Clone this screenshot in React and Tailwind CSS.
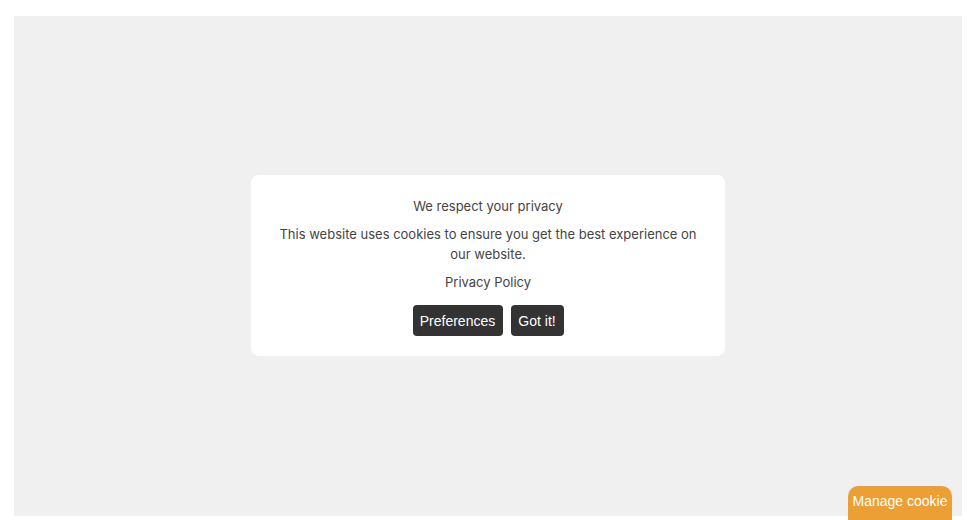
export default function App() {
  return (
    <div className="w-[967px] h-[520px] bg-white pt-[16px] pl-[14px] overflow-hidden relative">
      <div className="w-[948px] h-[500px] bg-[#f0f0f0] flex items-start justify-center pt-[159px]">
        <div className="w-[474px] h-[181px] bg-white rounded-lg px-6 pt-[21px] pb-5 flex flex-col items-center text-center text-[13px] leading-5 text-[#444]" style={{ fontFamily: 'Inter, "Noto Sans", sans-serif' }}>
          <p>We respect your privacy</p>
          <p className="mt-2">This website uses cookies to ensure you get the best experience on our website.</p>
          <p className="mt-2">Privacy Policy</p>
          <div className="mt-[13px] flex gap-2" style={{ fontFamily: '"Liberation Sans", Arial, sans-serif' }}>
            <button className="h-[31px] w-[90px] bg-[#333] text-white text-[14px] rounded leading-none">Preferences</button>
            <button className="h-[31px] w-[53px] bg-[#333] text-white text-[14px] rounded leading-none">Got it!</button>
          </div>
        </div>
      </div>
      <button className="absolute bottom-0 right-[15px] w-[104px] h-[34px] bg-[#eb9f35] text-white text-[14px] rounded-t-[10px] flex justify-center items-start pt-[7px] leading-4" style={{ fontFamily: '"Liberation Sans", Arial, sans-serif' }}>Manage cookie</button>
    </div>
  );
}
